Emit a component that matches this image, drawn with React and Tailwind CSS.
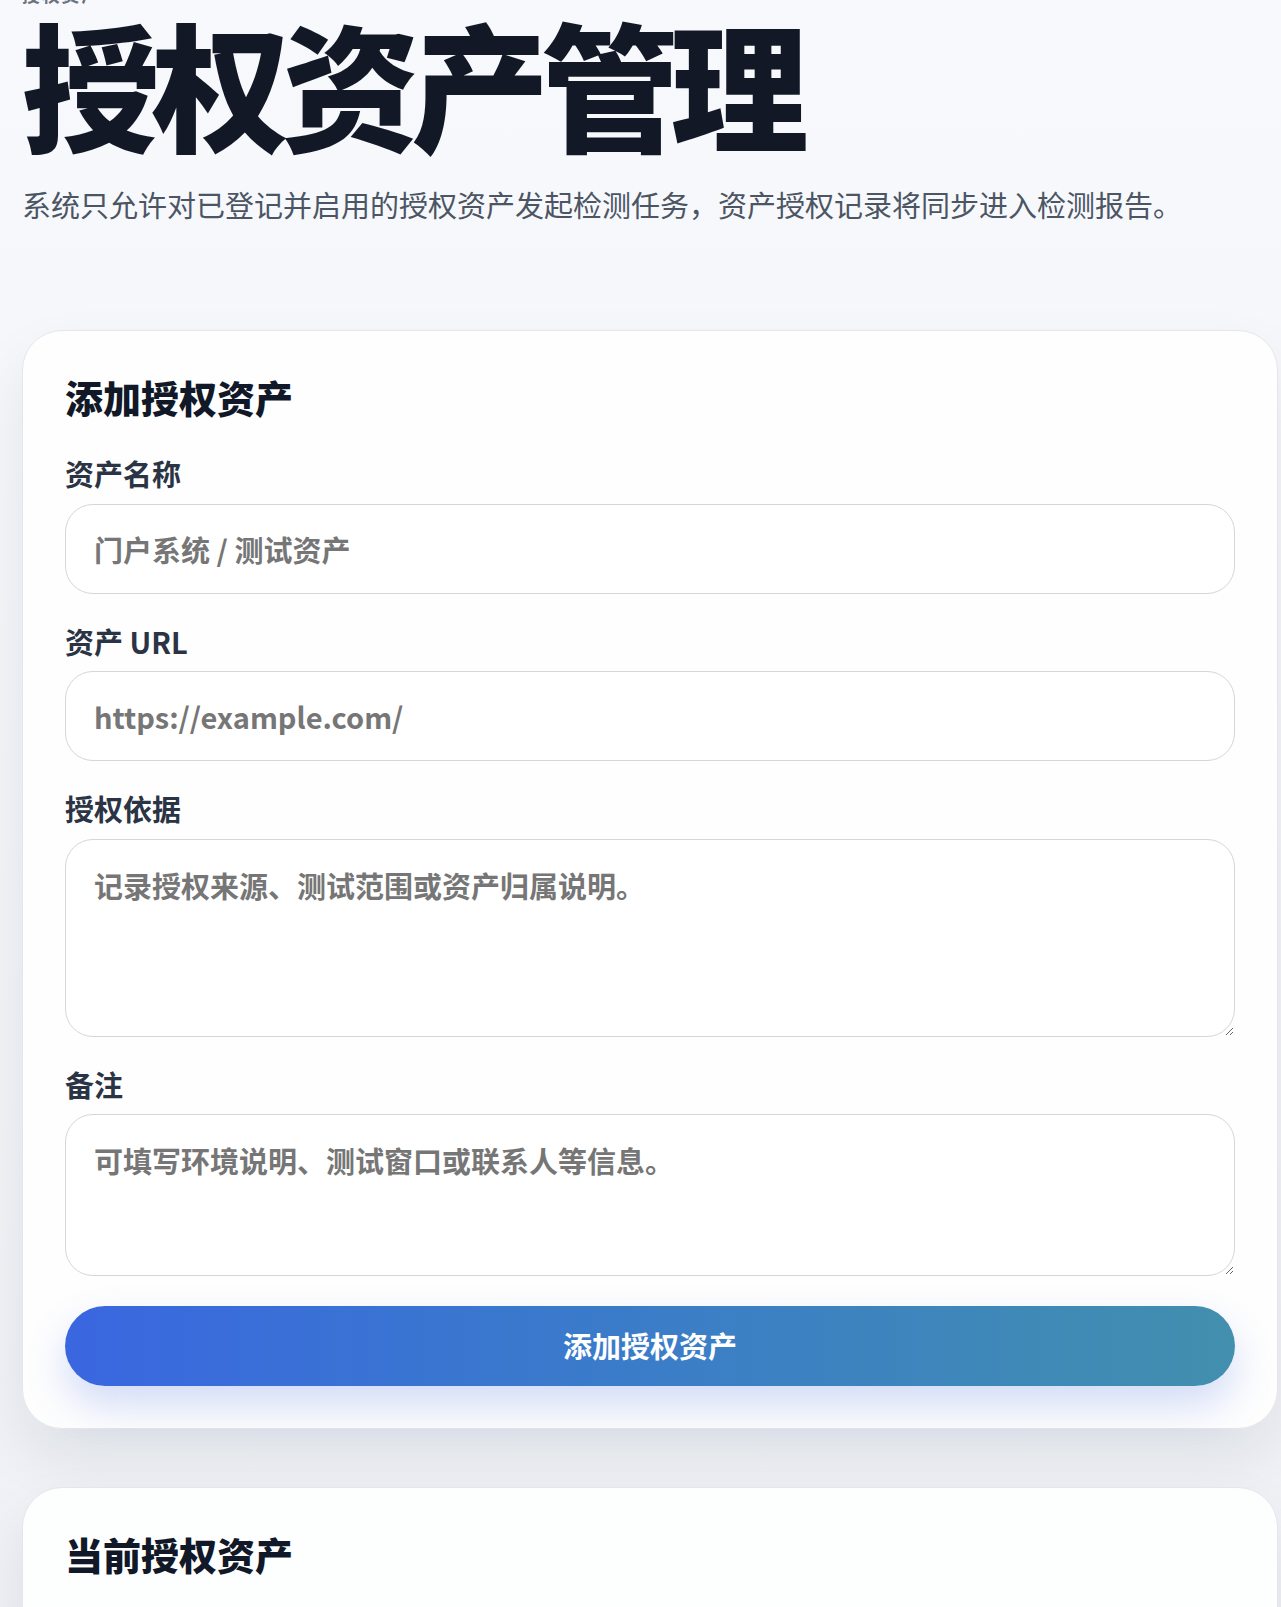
import { useState } from 'react';

const fieldBase =
  'w-full rounded-[28px] border border-[#d4d6dc] bg-white px-7 text-[29px] font-bold leading-normal text-[#1f2937] outline-none placeholder:text-[#767676] focus:border-[#3b66e0]';

function Field({ label, children }) {
  return (
    <label className="flex flex-col gap-2">
      <span className="text-[29px] font-bold leading-normal text-[#2b3444]">{label}</span>
      {children}
    </label>
  );
}

function AssetForm({ onAdd }) {
  const [name, setName] = useState('');
  const [url, setUrl] = useState('');
  const [basis, setBasis] = useState('');
  const [note, setNote] = useState('');

  const submit = (e) => {
    e.preventDefault();
    if (!name || !url) return;
    onAdd({ name, url, basis, note });
    setName('');
    setUrl('');
    setBasis('');
    setNote('');
  };

  return (
    <form onSubmit={submit} className="flex flex-col gap-[26px]">
      <Field label="资产名称">
        <input
          className={`${fieldBase} h-[90px]`}
          placeholder="门户系统 / 测试资产"
          value={name}
          onChange={(e) => setName(e.target.value)}
        />
      </Field>
      <Field label="资产 URL">
        <input
          className={`${fieldBase} h-[90px]`}
          placeholder="https://example.com/"
          value={url}
          onChange={(e) => setUrl(e.target.value)}
        />
      </Field>
      <Field label="授权依据">
        <textarea
          className={`${fieldBase} h-[198px] py-6`}
          placeholder="记录授权来源、测试范围或资产归属说明。"
          value={basis}
          onChange={(e) => setBasis(e.target.value)}
        />
      </Field>
      <Field label="备注">
        <textarea
          className={`${fieldBase} h-[162px] py-6`}
          placeholder="可填写环境说明、测试窗口或联系人等信息。"
          value={note}
          onChange={(e) => setNote(e.target.value)}
        />
      </Field>
      <button
        type="submit"
        className="mt-1 h-20 w-full rounded-full bg-gradient-to-r from-[#3a66e0] to-[#428fae] text-[29px] font-bold text-white shadow-[0_20px_40px_rgba(59,102,224,0.22)]"
      >
        添加授权资产
      </button>
    </form>
  );
}

export default function App() {
  const [assets, setAssets] = useState([]);

  return (
    <div className="min-h-screen overflow-hidden bg-gradient-to-b from-[#f8f9fc] to-[#eef0f5] pl-[22px] pr-[3px] font-['Noto_Sans_CJK_SC',sans-serif]">
      <header>
        <p className="-mt-[15px] text-[18px] font-bold leading-none tracking-[0.1em] text-[#6b7280]">授权资产</p>
        <h1 className="mt-[9px] text-[138px] font-black leading-none tracking-[-0.06em] text-[#121826]">
          授权资产管理
        </h1>
        <p className="mt-[33px] text-[29px] font-normal leading-normal text-[#4b5563]">
          系统只允许对已登记并启用的授权资产发起检测任务，资产授权记录将同步进入检测报告。
        </p>
      </header>

      <section className="mt-[103px] rounded-[40px] border border-[#e4e6eb] bg-white/90 p-[42px] shadow-[0_28px_60px_rgba(17,24,39,0.08)]">
        <h2 className="mb-[32px] text-[38px] font-black leading-tight text-[#111827]">添加授权资产</h2>
        <AssetForm onAdd={(a) => setAssets((prev) => [...prev, a])} />
      </section>

      <section className="mt-[58px] min-h-[300px] rounded-[40px] border border-[#e4e6eb] bg-white/90 p-[42px] shadow-[0_28px_60px_rgba(17,24,39,0.08)]">
        <h2 className="text-[38px] font-black leading-tight text-[#111827]">当前授权资产</h2>
        {assets.length > 0 && (
          <ul className="mt-6 flex flex-col gap-3">
            {assets.map((a, i) => (
              <li key={i} className="rounded-2xl border border-[#e4e6eb] px-6 py-4 text-[22px] text-[#2b3444]">
                <span className="font-bold">{a.name}</span> · {a.url}
              </li>
            ))}
          </ul>
        )}
      </section>
    </div>
  );
}
